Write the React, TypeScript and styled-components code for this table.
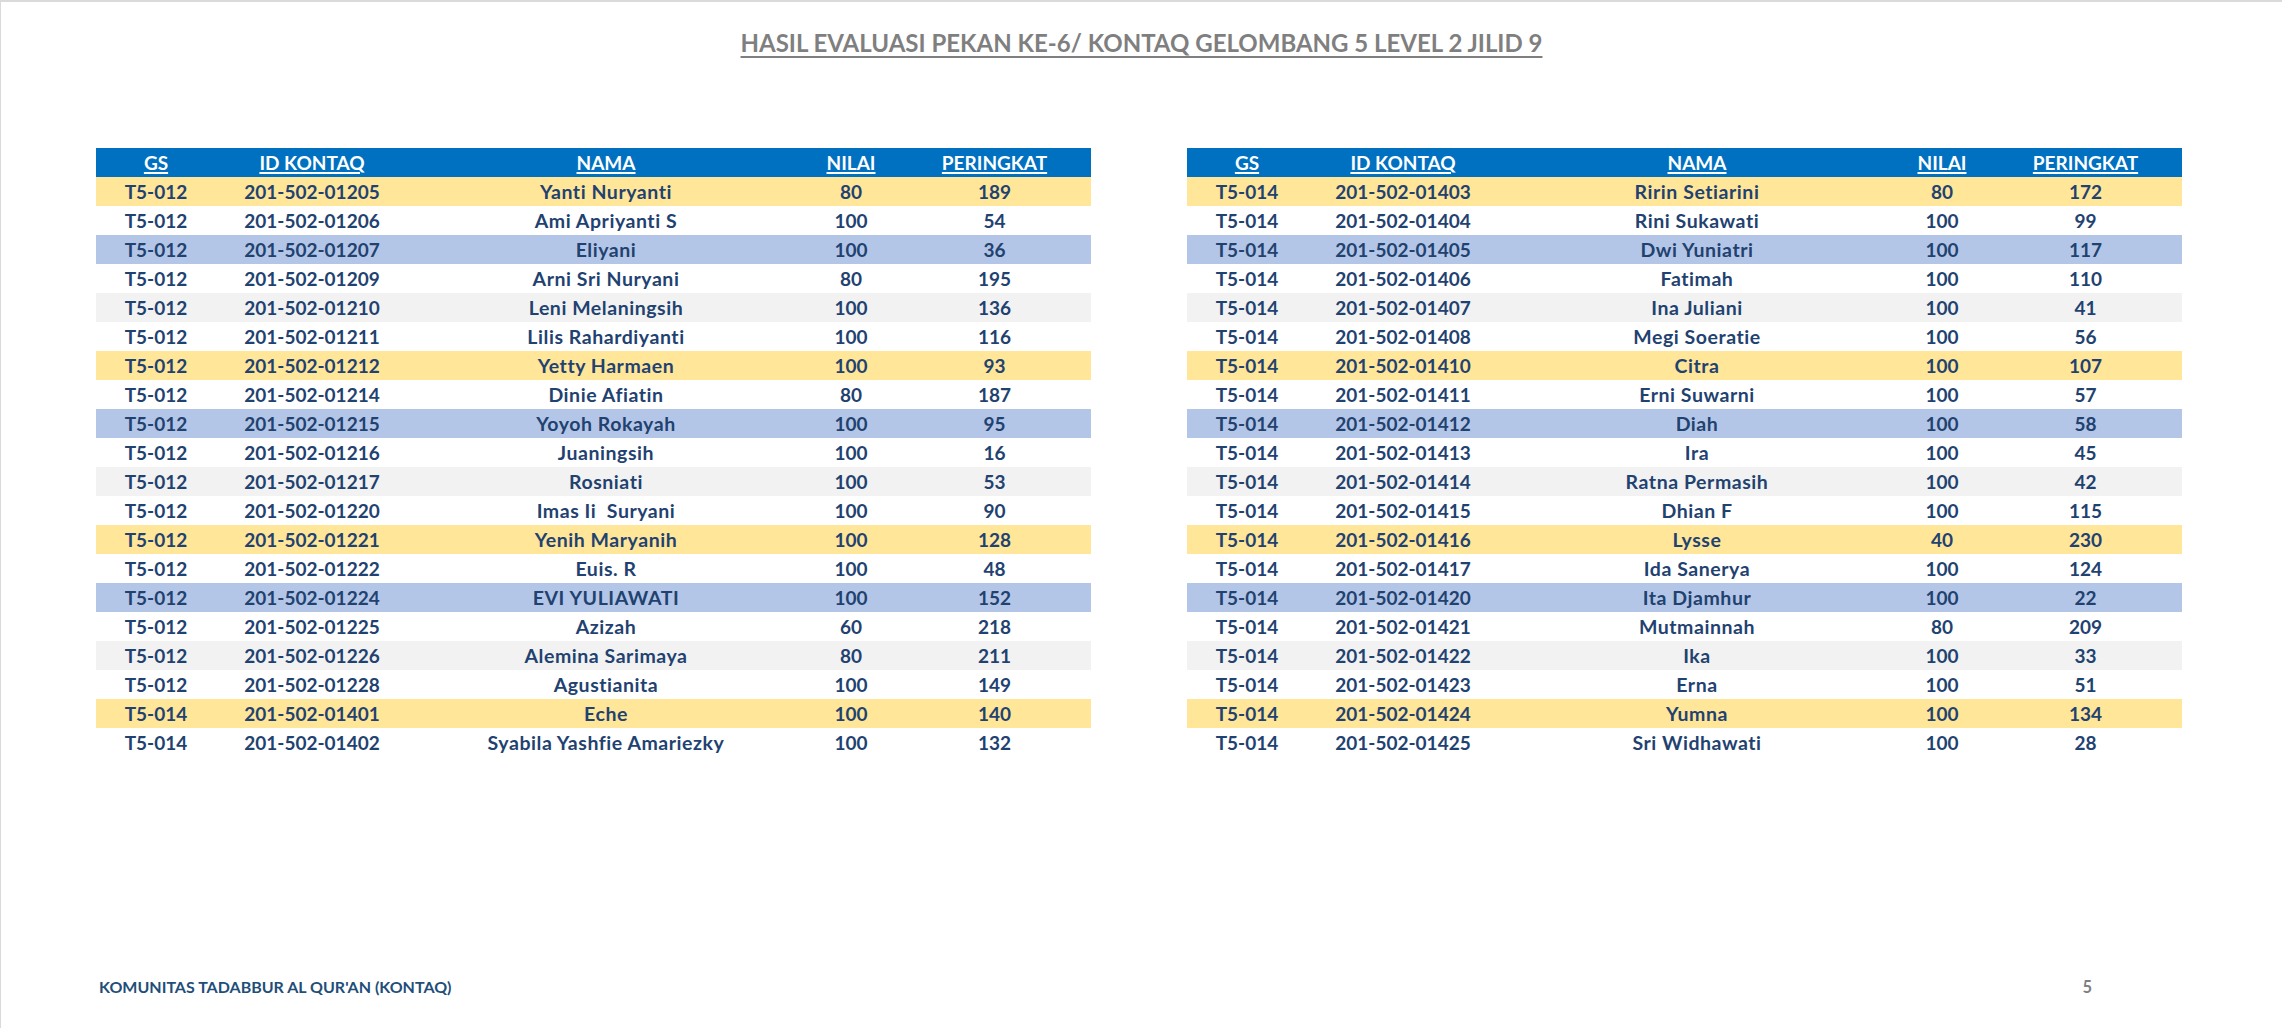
import React from 'react';
import styled, { createGlobalStyle } from 'styled-components';

type Row = [string, string, string, number, number];

const GlobalStyle = createGlobalStyle`
  html, body {
    margin: 0;
    padding: 0;
    background: #ffffff;
  }
  * {
    box-sizing: border-box;
  }
`;

const leftRows: Row[] = [
    ['T5-012', '201-502-01205', 'Yanti Nuryanti', 80, 189],
    ['T5-012', '201-502-01206', 'Ami Apriyanti S', 100, 54],
    ['T5-012', '201-502-01207', 'Eliyani', 100, 36],
    ['T5-012', '201-502-01209', 'Arni Sri Nuryani', 80, 195],
    ['T5-012', '201-502-01210', 'Leni Melaningsih', 100, 136],
    ['T5-012', '201-502-01211', 'Lilis Rahardiyanti', 100, 116],
    ['T5-012', '201-502-01212', 'Yetty Harmaen', 100, 93],
    ['T5-012', '201-502-01214', 'Dinie Afiatin', 80, 187],
    ['T5-012', '201-502-01215', 'Yoyoh Rokayah', 100, 95],
    ['T5-012', '201-502-01216', 'Juaningsih', 100, 16],
    ['T5-012', '201-502-01217', 'Rosniati', 100, 53],
    ['T5-012', '201-502-01220', 'Imas Ii  Suryani', 100, 90],
    ['T5-012', '201-502-01221', 'Yenih Maryanih', 100, 128],
    ['T5-012', '201-502-01222', 'Euis. R', 100, 48],
    ['T5-012', '201-502-01224', 'EVI YULIAWATI', 100, 152],
    ['T5-012', '201-502-01225', 'Azizah', 60, 218],
    ['T5-012', '201-502-01226', 'Alemina Sarimaya', 80, 211],
    ['T5-012', '201-502-01228', 'Agustianita', 100, 149],
    ['T5-014', '201-502-01401', 'Eche', 100, 140],
    ['T5-014', '201-502-01402', 'Syabila Yashfie Amariezky', 100, 132],
];

const rightRows: Row[] = [
    ['T5-014', '201-502-01403', 'Ririn Setiarini', 80, 172],
    ['T5-014', '201-502-01404', 'Rini Sukawati', 100, 99],
    ['T5-014', '201-502-01405', 'Dwi Yuniatri', 100, 117],
    ['T5-014', '201-502-01406', 'Fatimah', 100, 110],
    ['T5-014', '201-502-01407', 'Ina Juliani', 100, 41],
    ['T5-014', '201-502-01408', 'Megi Soeratie', 100, 56],
    ['T5-014', '201-502-01410', 'Citra', 100, 107],
    ['T5-014', '201-502-01411', 'Erni Suwarni', 100, 57],
    ['T5-014', '201-502-01412', 'Diah', 100, 58],
    ['T5-014', '201-502-01413', 'Ira', 100, 45],
    ['T5-014', '201-502-01414', 'Ratna Permasih', 100, 42],
    ['T5-014', '201-502-01415', 'Dhian F', 100, 115],
    ['T5-014', '201-502-01416', 'Lysse', 40, 230],
    ['T5-014', '201-502-01417', 'Ida Sanerya', 100, 124],
    ['T5-014', '201-502-01420', 'Ita Djamhur', 100, 22],
    ['T5-014', '201-502-01421', 'Mutmainnah', 80, 209],
    ['T5-014', '201-502-01422', 'Ika', 100, 33],
    ['T5-014', '201-502-01423', 'Erna', 100, 51],
    ['T5-014', '201-502-01424', 'Yumna', 100, 134],
    ['T5-014', '201-502-01425', 'Sri Widhawati', 100, 28],
];

// banding repeats every six rows: yellow, white, blue, white, grey, white
const bands = ['#ffe699', '#ffffff', '#b4c6e7', '#ffffff', '#f2f2f2', '#ffffff'];

const columns = ['GS', 'ID KONTAQ', 'NAMA', 'NILAI', 'PERINGKAT'];

const Page = styled.div`
  width: 2282px;
  height: 1028px;
  display: flex;
  flex-direction: column;
  border-top: 2px solid #dadada;
  border-left: 1px solid #dadada;
  font-family: Lato, 'Open Sans', sans-serif;
  font-weight: 700;
  font-variant-ligatures: none;
  overflow: hidden;
`;

const Title = styled.h1`
  margin: 0;
  padding-top: 27px;
  text-align: center;
  font-size: 24px;
  line-height: 28px;
  font-weight: 700;
  color: #7f7f7f;
  text-decoration: underline;
  text-decoration-thickness: 2px;
  text-underline-offset: 4px;
`;

const Tables = styled.div`
  display: flex;
  gap: 96px;
  margin-top: 91px;
  padding-left: 95px;
`;

const Table = styled.div`
  width: 995px;
  display: flex;
  flex-direction: column;
`;

const Line = styled.div<{ $bg: string }>`
  display: grid;
  grid-template-columns: 120px 192px 396px 94px 193px;
  height: 29px;
  background: ${(p) => p.$bg};
`;

const HeadCell = styled.div`
  text-align: center;
  font-size: 19px;
  line-height: 29px;
  color: #ffffff;
  text-decoration: underline;
  text-decoration-thickness: 1.5px;
  text-underline-offset: 2px;
`;

const Cell = styled.div<{ $name?: boolean }>`
  text-align: center;
  font-size: ${(p) => (p.$name ? '19.5px' : '19px')};
  letter-spacing: ${(p) => (p.$name ? '0.55px' : '0')};
  line-height: 29px;
  color: #1f4270;
  white-space: pre;
`;

const Footer = styled.div`
  margin-top: auto;
  display: flex;
  justify-content: space-between;
  align-items: baseline;
  padding: 0 190px 31px 98px;
`;

const FooterText = styled.div`
  font-size: 16px;
  line-height: 19px;
  color: #1f4e79;
`;

const PageNumber = styled.div`
  font-size: 16.5px;
  line-height: 19px;
  color: #7f7f7f;
`;

const ScoreTable: React.FC<{ rows: Row[] }> = ({ rows }) => (
    <Table>
        <Line $bg="#0070c0">
            {columns.map((c) => (
                <HeadCell key={c}>{c}</HeadCell>
            ))}
        </Line>
        {rows.map((row, i) => (
            <Line key={row[1]} $bg={bands[i % bands.length]}>
                {row.map((value, j) => (
                    <Cell key={j} $name={j === 2}>{value}</Cell>
                ))}
            </Line>
        ))}
    </Table>
);

const App: React.FC = () => (
    <>
        <GlobalStyle />
        <Page>
            <Title>HASIL EVALUASI PEKAN KE-6/ KONTAQ GELOMBANG 5 LEVEL 2 JILID 9</Title>
            <Tables>
                <ScoreTable rows={leftRows} />
                <ScoreTable rows={rightRows} />
            </Tables>
            <Footer>
                <FooterText>KOMUNITAS TADABBUR AL QUR'AN (KONTAQ)</FooterText>
                <PageNumber>5</PageNumber>
            </Footer>
        </Page>
    </>
);

export default App;
